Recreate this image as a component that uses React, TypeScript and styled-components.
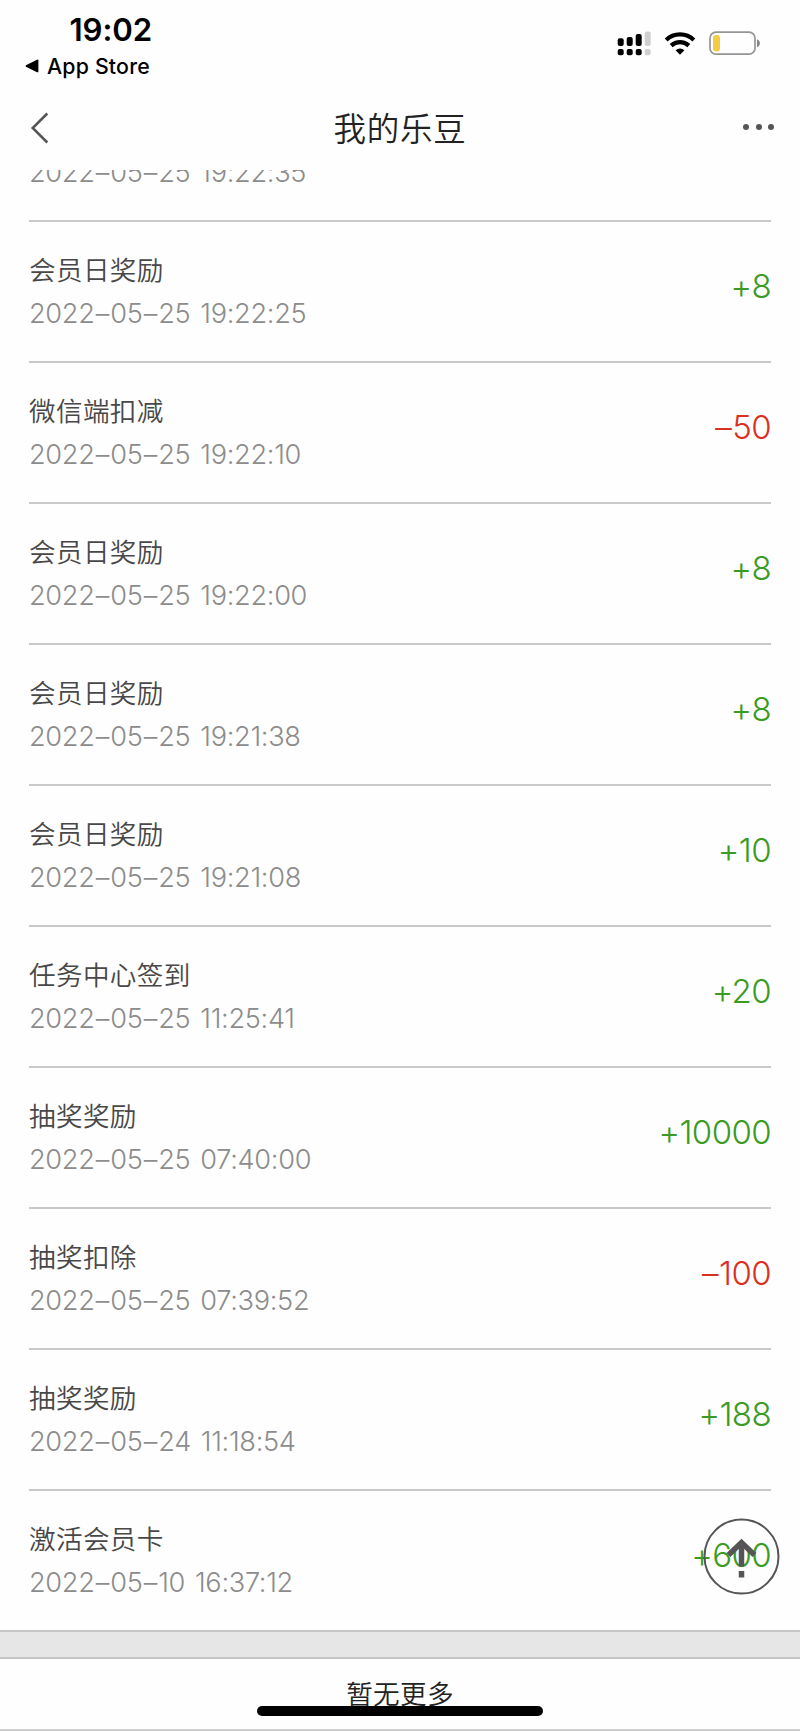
import React from 'react';
import styled, { createGlobalStyle } from 'styled-components';

const GlobalStyle = createGlobalStyle`
  * { box-sizing: border-box; }
  body {
    margin: 0;
    background: #fefefe;
    font-family: Inter, "Noto Sans CJK SC", sans-serif;
    font-feature-settings: "calt" 0;
  }
`;

const Screen = styled.main`
  position: relative;
  display: flex;
  flex-direction: column;
  width: 800px;
  height: 1731px;
  overflow: hidden;
  background: #fefefe;
`;

const StatusBar = styled.div`
  display: flex;
  justify-content: space-between;
  height: 85px;
  padding: 12px 40px 0 25px;
  color: #000;
`;

const Clock = styled.div`
  padding-left: 44.5px;
  font-size: 31.2px;
  font-weight: 600;
  line-height: 36px;
  letter-spacing: -0.1px;
`;

const BackToApp = styled.div`
  display: flex;
  align-items: center;
  gap: 8px;
  margin-top: 5px;
  font-size: 21.3px;
  font-weight: 500;
  line-height: 26px;
  letter-spacing: 0.2px;
`;

const StatusIcons = styled.div`
  display: flex;
  gap: 13px;
  padding-top: 19px;
  height: 44px;
`;

const NavBar = styled.header`
  display: grid;
  grid-template-columns: 80px 1fr 80px;
  align-items: center;
  height: 85px;
  padding: 0 26px 0 30px;
`;

const Title = styled.h1`
  margin: 0;
  padding: 4px 4px 0 0;
  font-size: 32.5px;
  font-weight: 350;
  line-height: 40px;
  letter-spacing: 0.7px;
  text-align: center;
  color: #222;
`;

const MoreButton = styled.div`
  display: flex;
  justify-content: flex-end;
  gap: 6.5px;
  padding-bottom: 2px;
`;

const Dot = styled.span`
  width: 6px;
  height: 6px;
  border-radius: 50%;
  background: #555;
`;

const Records = styled.section`
  display: flex;
  flex-direction: column;
  justify-content: flex-end;
  height: 1460px;
  padding: 0 29px;
  overflow: hidden;
`;

const Row = styled.article`
  display: flex;
  flex: none;
  align-items: center;
  justify-content: space-between;
  height: 141px;
  border-bottom: 2px solid #c9c9c9;

  &:last-child {
    height: 139px;
    border-bottom: 0;
  }
`;

const Details = styled.div`
  padding-top: 2px;
`;

const Name = styled.div`
  min-height: 40px;
  font-size: 26.6px;
  font-weight: 350;
  line-height: 40px;
  letter-spacing: 0.35px;
  color: #484848;
`;

const Time = styled.time`
  display: block;
  margin-top: 3px;
  font-size: 27.2px;
  font-weight: 300;
  line-height: 42px;
  letter-spacing: -0.32px;
  word-spacing: 2.6px;
  color: #8c8c8c;
`;

const Dash = styled.span`
  margin: 0 1.2px;
`;

const Amount = styled.div<{ $negative: boolean }>`
  margin-top: -12px;
  font-size: 33px;
  font-weight: 300;
  letter-spacing: -0.6px;
  color: ${(p) => (p.$negative ? '#d9301f' : '#3a9b22')};
`;

const Divider = styled.div`
  height: 29px;
  flex: none;
  background: #e6e6e6;
  border-top: 2px solid #c6c6c6;
  border-bottom: 2px solid #c6c6c6;
`;

const Footer = styled.footer`
  flex: 1;
  padding-top: 15px;
  border-bottom: 2px solid #cdcdcd;
  font-size: 26.6px;
  font-weight: 350;
  line-height: 40px;
  letter-spacing: 0.3px;
  text-align: center;
  color: #222;
`;

const HomeIndicator = styled.div`
  position: absolute;
  left: 257px;
  bottom: 15px;
  width: 286px;
  height: 10px;
  border-radius: 5px;
  background: #000;
`;

const ToTop = styled.button`
  position: absolute;
  right: 20px;
  bottom: 136px;
  width: 77px;
  height: 77px;
  padding: 0;
  border: 0;
  background: none;
`;

interface PointsRecord {
  name?: string;
  time: string;
  amount?: string;
}

const records: PointsRecord[] = [
  { time: '2022–05–25 19:22:35' },
  { name: '会员日奖励', time: '2022–05–25 19:22:25', amount: '+8' },
  { name: '微信端扣减', time: '2022–05–25 19:22:10', amount: '–50' },
  { name: '会员日奖励', time: '2022–05–25 19:22:00', amount: '+8' },
  { name: '会员日奖励', time: '2022–05–25 19:21:38', amount: '+8' },
  { name: '会员日奖励', time: '2022–05–25 19:21:08', amount: '+10' },
  { name: '任务中心签到', time: '2022–05–25 11:25:41', amount: '+20' },
  { name: '抽奖奖励', time: '2022–05–25 07:40:00', amount: '+10000' },
  { name: '抽奖扣除', time: '2022–05–25 07:39:52', amount: '–100' },
  { name: '抽奖奖励', time: '2022–05–24 11:18:54', amount: '+188' },
  { name: '激活会员卡', time: '2022–05–10 16:37:12', amount: '+600' },
];

const withDashes = (text: string) =>
  text.split(/(–)/).map((part, i) => (part === '–' ? <Dash key={i}>–</Dash> : part));

const Signal = () => (
  <svg width="34" height="25" viewBox="0 0 34 25">
    {[
      [0.7, 7.3, 7.7],
      [9.7, 6, 9],
      [18.7, 3, 12],
    ].map(([x, y, h]) => (
      <g key={x}>
        <rect x={x} y={y} width="6" height={h} rx="2" />
        <rect x={x} y="18" width="6" height="6.3" rx="2" />
      </g>
    ))}
    <g fill="#cfcfcf">
      <rect x="27.7" y="0.6" width="6" height="14.4" rx="2" />
      <rect x="27.7" y="18" width="6" height="6.3" rx="2" />
    </g>
  </svg>
);

const Wifi = () => (
  <svg width="32" height="25" viewBox="0 0 32 25" fill="none" stroke="#000" strokeWidth="4.2">
    <path d="M2.1 8.9a20 20 0 0 1 27.8 0" />
    <path d="M7.2 14.6a13 13 0 0 1 17.6 0" />
    <path d="M11.6 19.3a6.5 6.5 0 0 1 8.8 0L16 23.8Z" fill="#000" stroke="none" />
  </svg>
);

const Battery = () => (
  <svg width="51" height="25" viewBox="0 0 51 25">
    <rect x="1" y="1.2" width="45" height="22" rx="6" fill="none" stroke="#959595" strokeWidth="1.7" />
    <rect x="4" y="4" width="7" height="16.5" rx="3" fill="#f5cb45" />
    <path d="M48 8.2c3.8 1.2 3.8 6.8 0 8Z" fill="#858585" />
  </svg>
);

export default function App() {
  return (
    <Screen>
      <GlobalStyle />
      <StatusBar>
        <div>
          <Clock>19:02</Clock>
          <BackToApp>
            <svg width="14" height="14" viewBox="0 0 14 14">
              <path d="M1 6.2 12 .7Q13.4.3 13.4 1.6v10.8q0 1.2-1.4.8L1 7.8Q0 7 1 6.2Z" />
            </svg>
            App Store
          </BackToApp>
        </div>
        <StatusIcons>
          <Signal />
          <Wifi />
          <Battery />
        </StatusIcons>
      </StatusBar>
      <NavBar>
        <svg width="20" height="32" viewBox="0 0 20 32" fill="none" stroke="#555" strokeWidth="2.5">
          <path d="M17.3 1.5 2.7 16l14.6 14.5" />
        </svg>
        <Title>我的乐豆</Title>
        <MoreButton>
          <Dot />
          <Dot />
          <Dot />
        </MoreButton>
      </NavBar>
      <Records>
        {records.map((r) => (
          <Row key={r.time}>
            <Details>
              <Name>{r.name}</Name>
              <Time>{withDashes(r.time)}</Time>
            </Details>
            {r.amount && (
              <Amount $negative={r.amount.startsWith('–')}>{withDashes(r.amount)}</Amount>
            )}
          </Row>
        ))}
      </Records>
      <Divider />
      <Footer>暂无更多</Footer>
      <ToTop aria-label="返回顶部">
        <svg width="77" height="77" viewBox="0 0 77 77" fill="none" stroke="#555557">
          <circle cx="38.5" cy="38.5" r="37" strokeWidth="2" />
          <path d="M25.5 37 38.5 24.5 51.5 37" strokeWidth="5.5" />
          <path d="M38.5 25v23.5M38.5 53v6.5" strokeWidth="5.5" />
        </svg>
      </ToTop>
      <HomeIndicator />
    </Screen>
  );
}
